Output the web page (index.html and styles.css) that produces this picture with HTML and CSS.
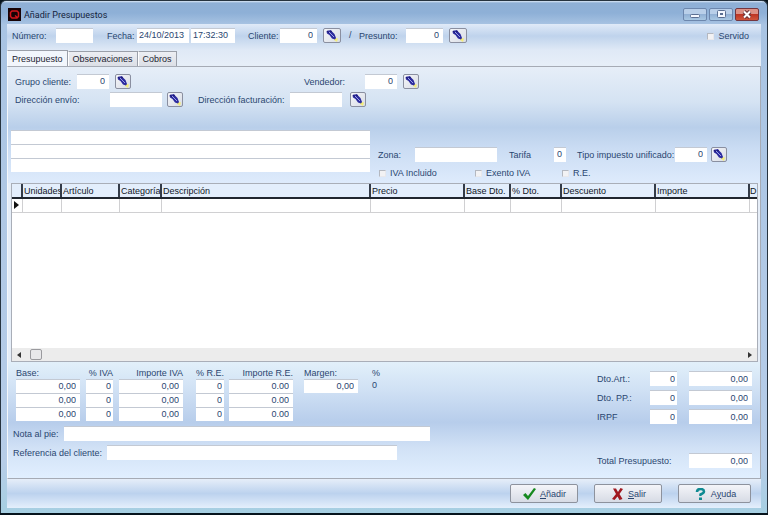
FILE: index.html
```html
<!DOCTYPE html>
<html lang="es">
<head>
<meta charset="utf-8">
<title>Añadir Presupuestos</title>
<link rel="stylesheet" href="styles.css">
</head>
<body>
<svg class="defs" aria-hidden="true">
  <symbol id="torch" viewBox="0 0 14 13">
    <path d="M9 8.500l4 1-1 3.500-3-2z" fill="#f3ec7c"/>
    <path d="M1.500 2.500Q2 1 4 1.500L6 1l1 1.500 2.500 2.500 1.500 4-1 1.500-3-1L4.500 6 2 4.500z" fill="#2c2a9e"/>
    <path d="M4 3l5 5" stroke="#9aa2e6"/>
    <path d="M2.500 2.500l1 1M5.500 2l1 1" stroke="#12104e"/>
  </symbol>
</svg>
<div class="window">
  <header class="titlebar">
    <svg class="logo" viewBox="0 0 13 13" aria-hidden="true"><rect width="13" height="13" fill="#170305"/><path d="M4 3h5l1.500 1.500v4L9 10H4L2.500 8.500v-4zM7 7.500l3 2.500" fill="none" stroke="#d3161c" stroke-width="1.500"/></svg>
    <h1>Añadir Presupuestos</h1>
    <div class="controls">
      <button class="control" type="button" aria-label="Minimizar"><svg viewBox="0 0 22 11"><rect x="6.500" y="5.500" width="9" height="3" rx="1" fill="#f4f8ff" stroke="#5b6f92"/></svg></button>
      <button class="control" type="button" aria-label="Maximizar"><svg viewBox="0 0 22 11"><rect x="7.500" y="1.500" width="8" height="7" rx="1" fill="#f4f8ff" stroke="#5b6f92"/><rect x="10.500" y="4.500" width="2" height="1" fill="#5b6f92" stroke="#5b6f92"/></svg></button>
      <button class="control close" type="button" aria-label="Cerrar"><svg viewBox="0 0 22 11"><path d="M8 2.500l6 6m0-6l-6 6" stroke="#683336" stroke-width="4"/><path d="M8 2.500l6 6m0-6l-6 6" stroke="#fff" stroke-width="2"/></svg></button>
    </div>
  </header>
  <form class="client">
    <div class="header-row">
      <label for="numero">Número:</label><input id="numero" class="w-short" type="text">
      <label for="fecha">Fecha:</label><input id="fecha" class="w-medium tight" type="text" value="24/10/2013"><input class="w-time tight" type="text" value="17:32:30" aria-label="Hora">
      <label for="cliente">Cliente:</label><input id="cliente" class="w-short num" type="text" value="0"><button class="find large" type="button" aria-label="Buscar cliente"><svg><use href="#torch"/></svg></button>
      <span>/</span>
      <label for="presunto">Presunto:</label><input id="presunto" class="w-short num" type="text" value="0"><button class="find large" type="button" aria-label="Buscar presunto"><svg><use href="#torch"/></svg></button>
      <label class="check served"><input type="checkbox">Servido</label>
    </div>
    <nav class="tabs">
      <button class="tab active" type="button">Presupuesto</button><button class="tab" type="button">Observaciones</button><button class="tab" type="button">Cobros</button>
    </nav>
    <main class="panel">
      <section class="upper">
        <div class="row group-row">
          <label for="grupo">Grupo cliente:</label><input id="grupo" class="w-code num" type="text" value="0"><button class="find" type="button" aria-label="Buscar grupo"><svg><use href="#torch"/></svg></button>
          <label for="vendedor">Vendedor:</label><input id="vendedor" class="w-code num" type="text" value="0"><button class="find" type="button" aria-label="Buscar vendedor"><svg><use href="#torch"/></svg></button>
        </div>
        <div class="row address-row">
          <label for="envio">Dirección envío:</label><input id="envio" class="w-medium" type="text"><button class="find" type="button" aria-label="Buscar envío"><svg><use href="#torch"/></svg></button>
          <label for="factura">Dirección facturación:</label><input id="factura" class="w-medium" type="text"><button class="find" type="button" aria-label="Buscar facturación"><svg><use href="#torch"/></svg></button>
        </div>
        <div class="details">
          <div class="stack">
            <input type="text" aria-label="Línea 1"><input type="text" aria-label="Línea 2"><input type="text" aria-label="Línea 3">
          </div>
          <div class="tax">
            <div class="row zone-row">
              <label for="zona">Zona:</label><input id="zona" class="w-zone" type="text">
              <label for="tarifa">Tarifa</label><input id="tarifa" class="w-digit" type="text" value="0">
              <label for="tipo">Tipo impuesto unificado:</label><input id="tipo" class="w-code num" type="text" value="0"><button class="find" type="button" aria-label="Buscar impuesto"><svg><use href="#torch"/></svg></button>
            </div>
            <div class="checks">
              <label class="check"><input type="checkbox">IVA Incluido</label>
              <label class="check"><input type="checkbox">Exento IVA</label>
              <label class="check"><input type="checkbox">R.E.</label>
            </div>
          </div>
        </div>
      </section>
      <section class="grid">
        <div class="grid-view">
          <table>
            <colgroup><col class="c-mark"><col class="c-units"><col class="c-item"><col class="c-cat"><col><col class="c-price"><col class="c-base"><col class="c-pct"><col class="c-price"><col class="c-price"><col class="c-last"></colgroup>
            <thead><tr><th></th><th>Unidades</th><th>Artículo</th><th>Categoría</th><th>Descripción</th><th>Precio</th><th>Base Dto.</th><th>% Dto.</th><th>Descuento</th><th>Importe</th><th>D</th></tr></thead>
            <tbody><tr><td class="mark"><svg viewBox="0 0 6 8"><path d="M1 0l5 4-5 4z" fill="#111"/></svg></td><td></td><td></td><td></td><td></td><td></td><td></td><td></td><td></td><td></td><td></td></tr></tbody>
          </table>
        </div>
        <div class="scroll">
          <svg viewBox="0 0 4 6"><path d="M4 0v6L0 3z" fill="#333"/></svg><span class="thumb"></span><svg class="end" viewBox="0 0 4 6"><path d="M0 0v6l4-3z" fill="#333"/></svg>
        </div>
      </section>
      <section class="lower">
        <div>
          <div class="totals">
            <div class="stack amount"><label for="base">Base:</label><input id="base" class="num" value="0,00"><input class="num" value="0,00" aria-label="Base 2"><input class="num" value="0,00" aria-label="Base 3"></div>
            <div class="stack rate"><label class="right" for="iva">% IVA</label><input id="iva" class="num slim" value="0"><input class="num slim" value="0" aria-label="% IVA 2"><input class="num slim" value="0" aria-label="% IVA 3"></div>
            <div class="stack amount"><label class="right" for="impiva">Importe IVA</label><input id="impiva" class="num" value="0,00"><input class="num" value="0,00" aria-label="Importe IVA 2"><input class="num" value="0,00" aria-label="Importe IVA 3"></div>
            <div class="stack rate"><label class="right" for="re">% R.E.</label><input id="re" class="num slim" value="0"><input class="num slim" value="0" aria-label="% R.E. 2"><input class="num slim" value="0" aria-label="% R.E. 3"></div>
            <div class="stack amount"><label class="right" for="impre">Importe R.E.</label><input id="impre" class="num" value="0.00"><input class="num" value="0.00" aria-label="Importe R.E. 2"><input class="num" value="0.00" aria-label="Importe R.E. 3"></div>
            <div class="stack margin"><label for="margen">Margen:</label><input id="margen" class="num" value="0,00"></div>
            <div class="percent"><span>%</span><output>0</output></div>
          </div>
          <div class="row note"><label for="nota">Nota al pie:</label><input id="nota" type="text"></div>
          <div class="row reference"><label for="ref">Referencia del cliente:</label><input id="ref" type="text"></div>
        </div>
        <div class="summary">
          <label for="dart">Dto.Art.:</label><input id="dart" class="w-rate num slim" value="0"><input class="num" value="0,00" aria-label="Importe Dto.Art.">
          <label for="dpp">Dto. PP.:</label><input id="dpp" class="w-rate num slim" value="0"><input class="num" value="0,00" aria-label="Importe Dto. PP.">
          <label for="irpf">IRPF</label><input id="irpf" class="w-rate num slim" value="0"><input class="num" value="0,00" aria-label="Importe IRPF">
          <div class="grand-total"><label for="total">Total Presupuesto:</label><input id="total" class="num" value="0,00"></div>
        </div>
      </section>
    </main>
    <footer class="actions">
      <button class="action" type="button"><svg viewBox="0 0 14 12"><path d="M1 7l2.500-2L6 8l6-8 2 1-8 11z" fill="#16891f"/></svg><span><u>A</u>ñadir</span></button>
      <button class="action" type="button"><svg viewBox="0 0 14 12"><path d="M3 0.500h3L8 4l2.500-4L13 1 9.500 6l3 5-3 1L7.500 8.500 4.500 12 2 11l4-5z" fill="#a01820"/></svg><span><u>S</u>alir</span></button>
      <button class="action wide" type="button"><svg viewBox="0 0 14 12"><path d="M4 4q0-3 3.500-3T11 3.500Q11 5 7.500 6.500V8" fill="none" stroke="#108a92" stroke-width="2.500"/><path d="M6 9.500h3V12H6z" fill="#108a92"/></svg><span>A<u>y</u>uda</span></button>
    </footer>
  </form>
</div>
</body>
</html>
```
FILE: styles.css
```css
* { box-sizing: border-box; }
body {
  margin: 0;
  background: #06131c;
  color: #2a4670;
  font: 9px/12px "Liberation Sans", Arial, sans-serif;
  white-space: nowrap;
}
.defs { position: absolute; width: 0; height: 0; }
input, button { margin: 0; padding: 0; border: 0; border-radius: 0; font: inherit; color: inherit; min-width: 0; }
.window {
  display: flex;
  flex-direction: column;
  min-height: calc(100vh - 2px);
  margin-bottom: 2px;
  padding: 0 6px 5px;
  border: 1px solid #26333f;
  border-bottom: 0;
  border-radius: 6px 6px 0 0;
  background: linear-gradient(#dbe8f6 0, #8fb0d6 2px, #8eb0d7 12px, #a9c4e3 24px, #b7cde8 90%, #a6cfe2 100%);
}
.titlebar { display: flex; align-items: center; height: 23px; padding: 4px 2px 0 1px; }
.logo { width: 13px; height: 13px; margin-right: 3px; }
h1 { flex: 1; margin: 0; color: #14233c; font: 9px/12px Roboto, "Liberation Sans", sans-serif; }
.controls { display: flex; gap: 2px; }
.control {
  width: 24px;
  height: 13px;
  border: 1px solid #6d87ad;
  border-radius: 2px;
  background: linear-gradient(#b9cfe9 0 50%, #92b1d5 50%, #a9c8e3);
}
.control svg { display: block; width: 22px; height: 11px; }
.close { border-color: #75363f; background: linear-gradient(#dc9186 0 50%, #bd3524 50%, #d0553b); }
.client {
  flex: 1;
  display: flex;
  flex-direction: column;
  background: linear-gradient(#e0eaf8 0, #bfd3ec 12px, #dfe9f6 26px, #e6eef8 40px);
}

/* Fields */
input { width: 100%; height: 15px; padding: 0 4px 1px; background: #fff; outline: 0; border-top: 1px solid #c3c9d3; }
.num { text-align: right; }
.tight, .slim { padding: 0 2px 1px; }
.w-digit { width: 12px; padding: 0 3px 1px; }
.w-rate { width: 27px; }
.w-code { width: 32px; }
.w-short { width: 37px; }
.w-time { width: 44px; }
.w-medium { width: 52px; }
.w-zone { width: 82px; }
.find {
  display: grid;
  place-items: center;
  width: 16px;
  height: 15px;
  border: 1px solid #8a8fa0;
  border-radius: 2px;
  background: linear-gradient(135deg, #f4f5f8, #d9dde6);
}
.find.large { width: 18px; }
.find svg { width: 14px; height: 13px; }
.check { display: flex; align-items: center; gap: 4px; }
.check input { appearance: none; width: 7px; height: 7px; padding: 0; border: 1px solid #e8e8ec; border-top-color: #b4b8c0; border-left-color: #b4b8c0; background: #f2f2f4; }

.header-row {
  display: grid;
  grid-template-columns: 44px 51px 30px 54px 57px 32px 43px 26px 10px 47px 43px 18px 1fr;
  align-items: center;
  height: 26px;
  padding: 3px 12px 7px 5px;
}
.header-row label, .row label { padding-top: 2px; }
.served { justify-self: end; }
.tabs { display: flex; align-items: flex-end; height: 16px; }
.tab { height: 15px; padding: 0 4px; border: 1px solid #9a9fa9; border-left-color: #fff; border-bottom: 0; background: linear-gradient(#eceef3, #dcdfe6); color: #1c2331; }
.tab.active { height: 17px; margin-bottom: -1px; background: #f2f6fc; }
.panel { flex: 1; display: flex; flex-direction: column; border: 1px solid #a6abb5; border-left-color: #f4f7fb; }
.row { display: grid; align-items: center; height: 18px; }
.upper { padding: 5px 4px 4px 3px; background: linear-gradient(#e6eef8 0, #d5e3f3 30%, #b9cfea 52%, #cadcf3 70%, #deebfc 100%); }
.group-row { grid-template-columns: 62px 38px 189px 61px 38px 1fr; padding-left: 4px; }
.address-row { grid-template-columns: 95px 57px 31px 92px 60px 1fr; padding-left: 4px; }
.details { display: grid; grid-template-columns: 359px 1fr; gap: 8px; margin-top: 22px; }
.stack { display: grid; align-content: start; }
.stack input { height: 14px; }
.tax { padding-top: 15px; }
.zone-row { grid-template-columns: 37px 94px 45px 23px 98px 36px 1fr; }
.checks { display: grid; grid-template-columns: 96px 87px 1fr; padding-top: 4px; padding-left: 1px; }

/* Line items */
.grid { flex: 1; display: flex; flex-direction: column; margin: 0 2px 0 3px; border: 1px solid #a9aeb8; background: #fff; }
.grid-view { flex: 1; overflow: hidden; }
table { width: 100%; border-collapse: collapse; table-layout: fixed; color: #10151f; }
th, td { height: 14px; padding: 0 1px; text-align: left; font-weight: normal; overflow: hidden; }
th { border-right: 2px solid #333b48; border-bottom: 2px solid #20262f; background: #e3eefc; }
td { border-right: 1px solid #d0d0d2; border-bottom: 1px solid #d0d0d2; }
th:last-child, td:last-child { border-right: 0; padding: 0; }
.mark svg { display: block; width: 6px; height: 8px; }
.c-mark { width: 10px; }
.c-units { width: 39px; }
.c-item { width: 58px; }
.c-cat { width: 42px; }
.c-price { width: 94px; }
.c-base { width: 46px; }
.c-pct { width: 51px; }
.c-last { width: 8px; }
.scroll { display: flex; align-items: center; gap: 9px; height: 13px; padding: 0 5px; background: #ececec; }
.scroll svg { width: 4px; height: 6px; }
.thumb { width: 12px; height: 11px; border: 1px solid #9a9a9e; border-radius: 2px; background: #e8e8ea; }
.end { margin-left: auto; }

/* Totals */
.lower { display: flex; justify-content: space-between; padding: 5px 8px 10px 5px; background: linear-gradient(#e2f0fa 0, #cfe0f4 25%, #b7cdeb 52%, #d2e2f6 75%, #e1efff 100%); }
.totals { display: grid; grid-template-columns: 70px 33px 77px 33px 75px 68px 10px; padding-left: 3px; }
.amount { width: 64px; }
.rate { width: 27px; }
.margin { width: 54px; }
.right { justify-self: end; }
.percent { display: grid; align-content: start; }
.note { grid-template-columns: 51px 366px; margin-top: 3px; }
.reference { grid-template-columns: 94px 290px; margin-top: 1px; }
.summary { display: grid; grid-template-columns: 53px 39px 63px; align-content: start; align-items: center; row-gap: 4px; padding-top: 4px; }
.grand-total { display: grid; grid-column: 1 / -1; grid-template-columns: 92px 63px; align-items: center; margin-top: 25px; }
.actions { display: flex; justify-content: flex-end; gap: 16px; padding: 5px 10px; background: linear-gradient(#e6eef9 0, #bcd2ee 50%, #e4effc 100%); }
.action { display: flex; align-items: center; justify-content: center; gap: 4px; width: 68px; height: 19px; border: 1px solid #8d929d; border-radius: 2px; background: linear-gradient(#f4f5f9, #d7dbe5); }
.action svg { width: 14px; height: 12px; }
.wide { width: 73px; }
```
